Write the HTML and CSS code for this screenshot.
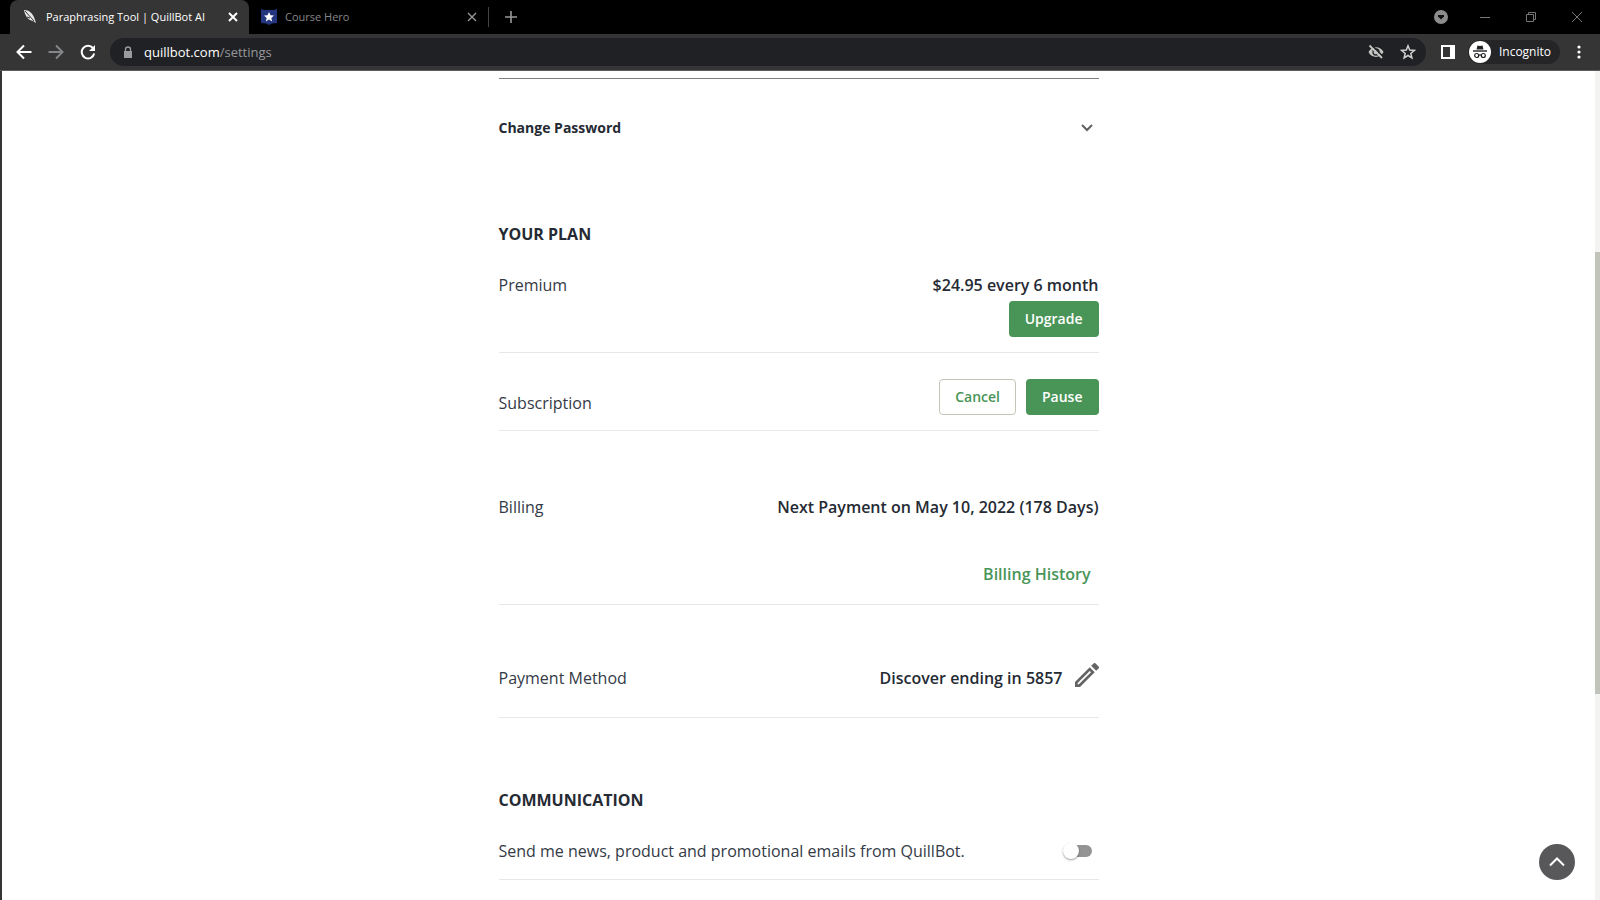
FILE: index.html
```html
<!DOCTYPE html>
<html lang="en">
<head>
    <meta charset="UTF-8">
    <meta name="viewport" content="width=device-width, initial-scale=1.0">
    <title>Paraphrasing Tool | QuillBot AI</title>
    <link rel="stylesheet" href="styles.css">
</head>
<body>
    <header class="browser">
        <div class="tabs">
            <div class="tab active">
                <svg class="favicon" viewBox="0 0 16 16"><path d="M2 1c5 0 9 3 11 10l1 3-3-2C6 11 3 7 2 1z" fill="#e8e8e8"/><path d="M3 2l9 10M5 8l3 1" stroke="#35363a" fill="none"/></svg>
                <span class="tab-title">Paraphrasing Tool | QuillBot AI</span>
                <button class="icon-btn" aria-label="Close tab"><svg width="10" height="10" viewBox="0 0 10 10"><path d="M1 1l8 8M9 1L1 9" stroke="#fff" stroke-width="2"/></svg></button>
            </div>
            <div class="tab">
                <svg class="favicon" viewBox="0 0 16 16"><path d="M0 0l3 1h10l3-1v14l-5 .5L8 16l-3-1.500L0 14z" fill="#24357f"/><path d="M8 3l1.500 3.300 3.500.3-2.700 2.300.9 3.600L8 10.600l-3.200 1.900.9-3.600L3 6.600l3.500-.3z" fill="#fff"/></svg>
                <span class="tab-title">Course Hero</span>
                <button class="icon-btn" aria-label="Close tab"><svg width="10" height="10" viewBox="0 0 10 10"><path d="M1 1l8 8M9 1L1 9" stroke="#999" stroke-width="1.300"/></svg></button>
            </div>
            <button class="icon-btn new-tab" aria-label="New tab"><svg width="12" height="12" viewBox="0 0 12 12"><path d="M6 0v12M0 6h12" stroke="#999" stroke-width="1.600"/></svg></button>
            <div class="window-buttons">
                <button class="icon-btn search-tabs" aria-label="Search tabs"><svg width="14" height="14" viewBox="0 0 14 14"><circle cx="7" cy="7" r="7" fill="#8c8c8c"/><path d="M4 5h6v1.500L7 9.500l-3-3z" fill="#111"/></svg></button>
                <button class="icon-btn" aria-label="Minimize"><svg width="10" height="10" viewBox="0 0 10 10"><path d="M0 5.500h10" stroke="#777"/></svg></button>
                <button class="icon-btn" aria-label="Restore"><svg width="10" height="10" viewBox="0 0 10 10"><path d="M.5 2.500h7v7h-7zM2.500 2.500v-2h7v7h-2" fill="none" stroke="#777"/></svg></button>
                <button class="icon-btn" aria-label="Close"><svg width="10" height="10" viewBox="0 0 10 10"><path d="M0 0l10 10M10 0L0 10" stroke="#777"/></svg></button>
            </div>
        </div>
        <div class="toolbar">
            <div class="nav">
                <button class="icon-btn" aria-label="Back"><svg width="16" height="16" viewBox="0 0 16 16"><path d="M15.500 8H2M8 1.500L1.500 8 8 14.500" fill="none" stroke="#fff" stroke-width="2"/></svg></button>
                <button class="icon-btn" aria-label="Forward"><svg width="16" height="16" viewBox="0 0 16 16"><path d="M.5 8H14M8 1.500L14.500 8 8 14.500" fill="none" stroke="#85868a" stroke-width="2"/></svg></button>
                <button class="icon-btn" aria-label="Reload"><svg width="16" height="16" viewBox="0 0 16 16"><path d="M13 4.200A6.300 6.300 0 1 0 14.200 9.500" fill="none" stroke="#fff" stroke-width="2"/><path d="M15 1v6H9z" fill="#fff"/></svg></button>
            </div>
            <div class="address">
                <svg width="10" height="13" viewBox="0 0 10 13"><path d="M1 5h8v7H1z" fill="#9a9b9d"/><path d="M2.500 6V3.500a2.500 2.500 0 0 1 5 0V6" fill="none" stroke="#9a9b9d" stroke-width="1.300"/></svg>
                <span class="url">quillbot.com<span>/settings</span></span>
                <button class="icon-btn" aria-label="Third-party cookies blocked"><svg width="16" height="16" viewBox="0 0 16 16"><path d="M.5 8c3-6.500 12-6.500 15 0-3 6.500-12 6.500-15 0z" fill="#c4c5c1"/><circle cx="8" cy="8" r="3" fill="none" stroke="#202124" stroke-width="1.300"/><path d="M3 .5l12.500 12.500" stroke="#202124" stroke-width="1.600"/><path d="M1.500 1.500l12.500 12.500" stroke="#c4c5c1" stroke-width="1.800"/></svg></button>
                <button class="icon-btn" aria-label="Bookmark this page"><svg width="16" height="16" viewBox="0 0 16 16"><path d="M8 1.800l1.700 4.300 4.600.3-3.500 3 1.100 4.500L8 11.500l-3.900 2.400 1.100-4.500-3.500-3 4.600-.3z" fill="none" stroke="#d0d1cd" stroke-width="1.500"/></svg></button>
            </div>
            <button class="icon-btn" aria-label="Side panel"><svg width="14" height="14" viewBox="0 0 14 14"><path d="M1 1h12v12H1z" fill="none" stroke="#fff" stroke-width="2"/><path d="M9 0h5v14H9z" fill="#fff"/></svg></button>
            <button class="incognito">
                <svg width="22" height="22" viewBox="0 0 22 22"><circle cx="11" cy="11" r="11" fill="#fff"/><path d="M7.500 8.500l1-4 2.500.5 2.500-.5 1 4z" fill="#202124"/><path d="M4 10h14" stroke="#202124" stroke-width="1.400"/><g fill="none" stroke="#202124" stroke-width="1.200"><circle cx="7.700" cy="14.500" r="2"/><circle cx="14.300" cy="14.500" r="2"/><path d="M9.700 14h2.600"/></g></svg>
                Incognito
            </button>
            <button class="icon-btn" aria-label="Menu"><svg width="4" height="14" viewBox="0 0 4 14" fill="#fff"><circle cx="2" cy="2" r="1.600"/><circle cx="2" cy="7" r="1.600"/><circle cx="2" cy="12" r="1.600"/></svg></button>
        </div>
    </header>

    <div class="viewport">
        <main>
            <div class="settings">
                <button class="password">
                    Change Password
                    <svg width="12" height="8" viewBox="0 0 12 8"><path d="M1 1l5 5 5-5" fill="none" stroke="#5f6063" stroke-width="2"/></svg>
                </button>

                <section>
                    <h2>YOUR PLAN</h2>
                    <div class="row plan">
                        <span>Premium</span>
                        <div class="value">
                            <strong>$24.95 every 6 month</strong>
                            <button class="btn">Upgrade</button>
                        </div>
                    </div>
                    <div class="row subscription">
                        <span>Subscription</span>
                        <div class="actions">
                            <button class="btn outline">Cancel</button>
                            <button class="btn">Pause</button>
                        </div>
                    </div>
                    <div class="row billing">
                        <span>Billing</span>
                        <div class="value">
                            <strong>Next Payment on May 10, 2022 (178 Days)</strong>
                            <a href="#">Billing History</a>
                        </div>
                    </div>
                    <div class="row payment">
                        <span>Payment Method</span>
                        <div class="actions">
                            <strong>Discover ending in 5857</strong>
                            <button class="icon-btn edit" aria-label="Edit payment method"><svg width="24" height="24" viewBox="3 3 18 18"><path d="M14.060 9.020l.92.92L5.920 19H5v-.92l9.060-9.060M17.660 3c-.25 0-.51.1-.7.290l-1.830 1.830 3.750 3.750 1.830-1.830c.39-.39.39-1.020 0-1.410l-2.340-2.340c-.2-.2-.45-.29-.71-.29zm-3.600 3.190L3 17.250V21h3.750L17.810 9.940l-3.750-3.750z" fill="#646464"/></svg></button>
                        </div>
                    </div>
                </section>

                <section>
                    <h2>COMMUNICATION</h2>
                    <div class="row emails">
                        <label for="news">Send me news, product and promotional emails from QuillBot.</label>
                        <input type="checkbox" id="news" class="switch">
                    </div>
                </section>
            </div>
        </main>
        <div class="scrollbar"><div class="thumb"></div></div>
        <button class="to-top" aria-label="Back to top"><svg width="16" height="10" viewBox="0 0 16 10"><path d="M1 8.500l7-7 7 7" fill="none" stroke="#fff" stroke-width="2"/></svg></button>
    </div>
</body>
</html>
```
FILE: styles.css
```css
* {
    box-sizing: border-box;
}
body {
    margin: 0;
    height: 100vh;
    display: flex;
    flex-direction: column;
    overflow: hidden;
    font-family: "Open Sans", "Noto Sans", sans-serif;
    font-size: 16px;
    line-height: 24px;
    color: #343a46;
    background: #fff;
}
button {
    font: inherit;
    color: inherit;
    background: none;
    border: none;
    padding: 0;
    cursor: pointer;
}
svg {
    display: block;
    flex: none;
}

/* Browser bar */
.browser {
    flex: none;
    background: #000;
    color: #fff;
    font-size: 12px;
    line-height: 16px;
}
.tabs {
    display: flex;
    align-items: center;
    height: 34px;
    padding-left: 10px;
    font-size: 11px;
}
.tab {
    display: flex;
    align-items: center;
    gap: 8px;
    width: 239px;
    height: 34px;
    padding: 0 11px 0 12px;
    color: #85868a;
}
.tab.active {
    background: #353535;
    border-radius: 8px 8px 0 0;
    color: #fff;
}
.favicon {
    width: 16px;
    height: 16px;
}
.tab-title {
    flex: 1;
    white-space: nowrap;
}
.new-tab {
    border-left: 1px solid #444;
    height: 20px;
    padding-left: 16px;
}
.window-buttons {
    display: flex;
    align-items: center;
    gap: 36px;
    margin-left: auto;
    padding-right: 18px;
}
.search-tabs {
    margin-right: -4px;
}
.toolbar {
    display: flex;
    align-items: center;
    height: 37px;
    padding: 0 19px 0 16px;
    background: #353535;
    border-bottom: 1px solid #5c5c5c;
}
.nav {
    display: flex;
    gap: 16px;
}
.address {
    flex: 1;
    display: flex;
    align-items: center;
    gap: 16px;
    height: 28px;
    margin: 0 15px 0 14px;
    padding: 0 10px 0 13px;
    border-radius: 14px;
    background: #202124;
    font-size: 13px;
}
.url {
    flex: 1;
    margin-left: -5px;
}
.url span {
    color: #96979b;
}
.incognito {
    display: flex;
    align-items: center;
    gap: 8px;
    height: 24px;
    margin: 0 17px 0 13px;
    padding: 0 9px 0 1px;
    border-radius: 12px;
    background: #252528;
}

/* Settings page */
.viewport {
    flex: 1;
    min-height: 0;
    display: flex;
    position: relative;
    border-left: 2px solid #353535;
}
main {
    flex: 1;
    overflow: hidden;
    padding: 7px 16px 0;
}
.settings {
    max-width: 600px;
    margin: 0 auto;
    border-top: 1px solid #7d7d7d;
}
.password {
    display: flex;
    align-items: center;
    justify-content: space-between;
    width: 100%;
    height: 98px;
    padding-right: 6px;
    color: #252a33;
    font-size: 14px;
    font-weight: 700;
}
section {
    padding-top: 45px;
}
section + section {
    padding-top: 70px;
}
h2 {
    margin: 0 0 27px;
    color: #252a33;
    font-size: 16px;
    line-height: 24px;
    font-weight: 700;
}
strong {
    color: #252a33;
    font-weight: 600;
}
.row {
    display: flex;
    justify-content: space-between;
    border-bottom: 1px solid #e6e9e8;
}
.value {
    display: flex;
    flex-direction: column;
    align-items: flex-end;
}
.actions {
    display: flex;
    align-items: center;
    gap: 10px;
}
.plan {
    padding-bottom: 15px;
}
.plan .value {
    gap: 4px;
}
.subscription {
    align-items: flex-end;
    padding: 26px 0 15px;
}
.billing {
    padding: 64px 0 18px;
}
.billing .value {
    gap: 43px;
}
.value a {
    margin-right: 8px;
    color: #499557;
    font-weight: 600;
    text-decoration: none;
}
.payment {
    padding: 61px 0 27px;
}
.payment .actions {
    gap: 12px;
}
.edit {
    align-self: flex-end;
    margin-bottom: 3px;
    height: 24px;
}
.payment .actions {
    height: 24px;
}
.emails {
    align-items: center;
    padding-bottom: 16px;
}
.btn {
    height: 36px;
    padding: 0 16px;
    border-radius: 4px;
    background: #499557;
    color: #fff;
    font-size: 14px;
    font-weight: 600;
}
.btn.outline {
    background: #fff;
    border: 1px solid #c2c6b6;
    padding: 0 15px;
    color: #499557;
}
.switch {
    appearance: none;
    position: relative;
    width: 26px;
    height: 12px;
    margin: 0 7px 0 0;
    border-radius: 6px;
    background: #949494;
}
.switch::before {
    content: '';
    position: absolute;
    top: -2px;
    left: -3px;
    width: 16px;
    height: 16px;
    border-radius: 50%;
    background: #fff;
    box-shadow: 0 1px 2px rgba(0, 0, 0, 0.4);
}
.scrollbar {
    display: flex;
    flex-direction: column;
    width: 5px;
    background: #f3f4f1;
}
.scrollbar::before {
    content: '';
    flex: 181;
}
.scrollbar::after {
    content: '';
    flex: 206;
}
.thumb {
    flex: 442;
    background: #c1c4bb;
}
.to-top {
    position: absolute;
    right: 25px;
    bottom: 20px;
    display: flex;
    align-items: center;
    justify-content: center;
    width: 36px;
    height: 36px;
    border-radius: 50%;
    background: #58585a;
}
```
